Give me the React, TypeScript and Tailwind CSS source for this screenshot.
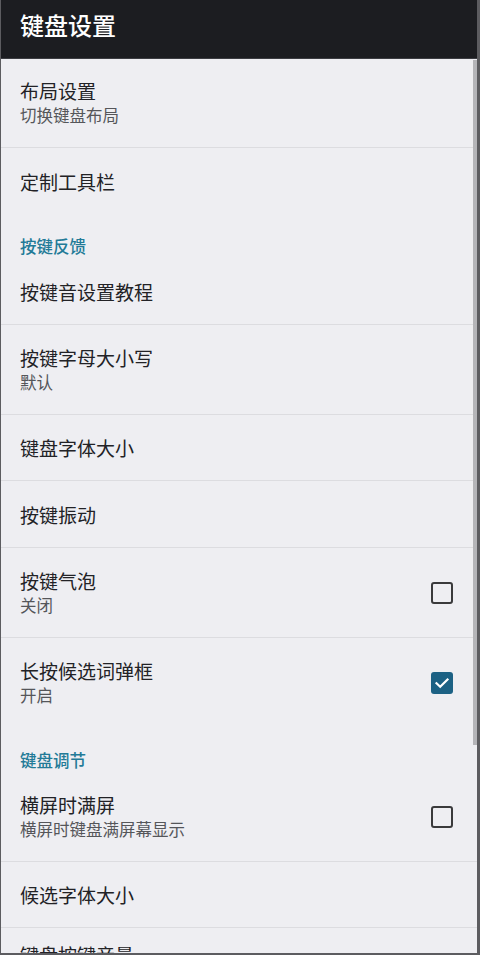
import React from "react";

type Row =
  | { kind: "item"; title: string; sub?: string; h: number; divider: boolean; check?: "on" | "off"; last?: boolean }
  | { kind: "cat"; title: string };

const rows: Row[] = [
  { kind: "item", title: "布局设置", sub: "切换键盘布局", h: 89, divider: true },
  { kind: "item", title: "定制工具栏", h: 66, divider: false },
  { kind: "cat", title: "按键反馈" },
  { kind: "item", title: "按键音设置教程", h: 66, divider: true },
  { kind: "item", title: "按键字母大小写", sub: "默认", h: 90, divider: true },
  { kind: "item", title: "键盘字体大小", h: 66, divider: true },
  { kind: "item", title: "按键振动", h: 67, divider: true },
  { kind: "item", title: "按键气泡", sub: "关闭", h: 90, divider: true, check: "off" },
  { kind: "item", title: "长按候选词弹框", sub: "开启", h: 90, divider: false, check: "on" },
  { kind: "cat", title: "键盘调节" },
  { kind: "item", title: "横屏时满屏", sub: "横屏时键盘满屏幕显示", h: 89, divider: true, check: "off" },
  { kind: "item", title: "候选字体大小", h: 66, divider: true },
  { kind: "item", title: "键盘按键音量", h: 66, divider: false, last: true },
];

function Check({ on }: { on: boolean }) {
  if (on) {
    return (
      <div className="w-[22px] h-[22px] rounded-[3px] bg-[#1c6184] flex items-center justify-center">
        <svg width="16" height="16" viewBox="0 0 16 16" fill="none">
          <path d="M2.5 8.3 L6.2 11.8 L13.5 4.5" stroke="white" strokeWidth="2.2" strokeLinecap="square" />
        </svg>
      </div>
    );
  }
  return <div className="w-[22px] h-[22px] rounded-[3px] border-2 border-[#3a3a3c]" />;
}

export default function App() {
  return (
    <div
      className="relative w-[480px] h-[955px] overflow-hidden bg-[#eeeef2] border-l border-r-[3px] border-b-2 border-[#5c5c60]"
      style={{ fontFamily: '"Noto Sans CJK SC", "Noto Sans", sans-serif' }}
    >
      <div className="h-[59px] bg-[#1c1d21] border-b border-[#3c3d42] flex items-center pl-[19px] pb-[9px]">
        <span className="text-white text-[24px] leading-[30px] font-medium">键盘设置</span>
      </div>
      {rows.map((r, i) =>
        r.kind === "cat" ? (
          <div key={i} className="h-[45px] flex items-end pl-[19px]">
            <span className="text-[#227a97] text-[16.5px] leading-[25px] font-medium">{r.title}</span>
          </div>
        ) : (
          <div
            key={i}
            className={`flex pl-[19px] pr-[24px] ${r.last ? "items-start pt-[14px]" : "items-center"} ${r.divider ? "border-b border-[#dcdce0]" : ""}`}
            style={{ height: r.h }}
          >
            <div className="flex-1 flex flex-col">
              <span className="text-[#222226] text-[19px] leading-[25px]">{r.title}</span>
              {r.sub && <span className="text-[#55565a] text-[16.5px] leading-[25px]">{r.sub}</span>}
            </div>
            {r.check && <Check on={r.check === "on"} />}
          </div>
        )
      )}
      <div className="absolute right-0 top-[60px] w-[4px] h-[685px] bg-[#b4b4b8]" />
    </div>
  );
}
